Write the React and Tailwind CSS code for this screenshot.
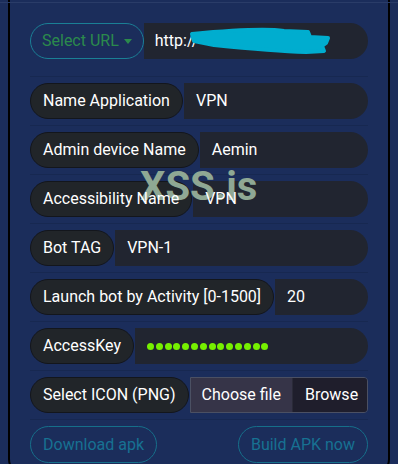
import React from "react";

const rows = [
  { label: "Name Application", value: "VPN" },
  { label: "Admin device Name", value: "Aemin" },
  { label: "Accessibility Name", value: "VPN" },
  { label: "Bot TAG", value: "VPN-1" },
  { label: "Launch bot by Activity [0-1500]", value: "20" },
];

const Pill = ({ children }) => (
  <div className="flex items-center h-[36px] px-[12px] rounded-full bg-[#212529] border border-[#13161c] text-white whitespace-nowrap">
    <span className="relative z-[2]">{children}</span>
  </div>
);

const Field = ({ children }) => (
  <div className="flex-1 flex items-center h-[36px] ml-[1px] pl-[12px] rounded-r-full bg-[#212530] text-white">
    {children}
  </div>
);

export default function App() {
  return (
    <div
      className="relative w-[398px] h-[464px] overflow-hidden bg-[#1b2d5b] text-[16px]"
      style={{ fontFamily: "Roboto, 'Liberation Sans', sans-serif" }}
    >
      <div className="absolute left-0 right-0 top-[2px] h-px bg-[#2a3c68]" />

      <div className="mx-[8px] border-x-2 border-b-2 border-black rounded-b-[16px] px-[20px] pt-[23px] pb-[10px]">
        {/* url row */}
        <div className="pb-[17px] border-b border-[#172851]">
          <div className="flex h-[36px]">
            <button className="flex items-center gap-[5px] px-[11px] rounded-full border border-[#1a7f95] text-[#2b8a4c]">
              Select URL
              <svg width="8" height="5" viewBox="0 0 8 5">
                <path d="M0 0h8L4 5z" fill="#2b8a4c" />
              </svg>
            </button>
            <div className="relative flex-1 flex items-center pl-[11px] rounded-r-full bg-[#212530] text-white">
              <span>http://</span>
              <svg className="absolute left-[40px] top-[2px]" width="150" height="32" viewBox="0 0 150 32">
                <path
                  d="M8 9 C40 6 80 3 100 6 L124 7 L126 12 L144 13 L142 18 L138 21 L140 26 L122 27 C90 26 60 23 30 20 L10 16 Z"
                  fill="#00adcf"
                  stroke="#00adcf"
                  strokeWidth="4"
                  strokeLinejoin="round"
                />
              </svg>
            </div>
          </div>
        </div>

        {rows.map((r) => (
          <div key={r.label} className="py-[6px] border-b border-[#172851]">
            <div className="flex">
              <Pill>{r.label}</Pill>
              <Field>
                <span className="relative z-[2]">{r.value}</span>
              </Field>
            </div>
          </div>
        ))}

        <div className="py-[6px] border-b border-[#172851]">
          <div className="flex">
            <Pill>AccessKey</Pill>
            <Field>
              <div className="flex gap-[1.8px]">
                {Array.from({ length: 14 }).map((_, i) => (
                  <span key={i} className="w-[7px] h-[7px] rounded-full bg-[#76f000]" />
                ))}
              </div>
            </Field>
          </div>
        </div>

        <div className="py-[6px] border-b border-[#172851]">
          <div className="flex">
            <Pill>Select ICON (PNG)</Pill>
            <div className="flex-1 flex ml-[1px] h-[36px] border border-[#4b5063] rounded-r-[4px] overflow-hidden text-white whitespace-nowrap">
              <div className="flex items-center px-[11px] bg-[#363448] border-r border-[#2a2a38]">Choose file</div>
              <div className="flex-1 flex items-center px-[12px] bg-[#1f1e2c]">Browse</div>
            </div>
          </div>
        </div>

        <div className="flex justify-between pt-[6px]">
          <button className="h-[37px] px-[12px] rounded-full border border-[#166f8a] text-[#177192]">Download apk</button>
          <button className="h-[37px] px-[12px] rounded-full border border-[#166f8a] text-[#177192]">Build APK now</button>
        </div>
      </div>

      <div className="absolute left-[140px] top-[167px] z-[1] text-[40px] leading-[40px] font-bold text-[#8fa894]">
        XSS.is
      </div>
    </div>
  );
}
